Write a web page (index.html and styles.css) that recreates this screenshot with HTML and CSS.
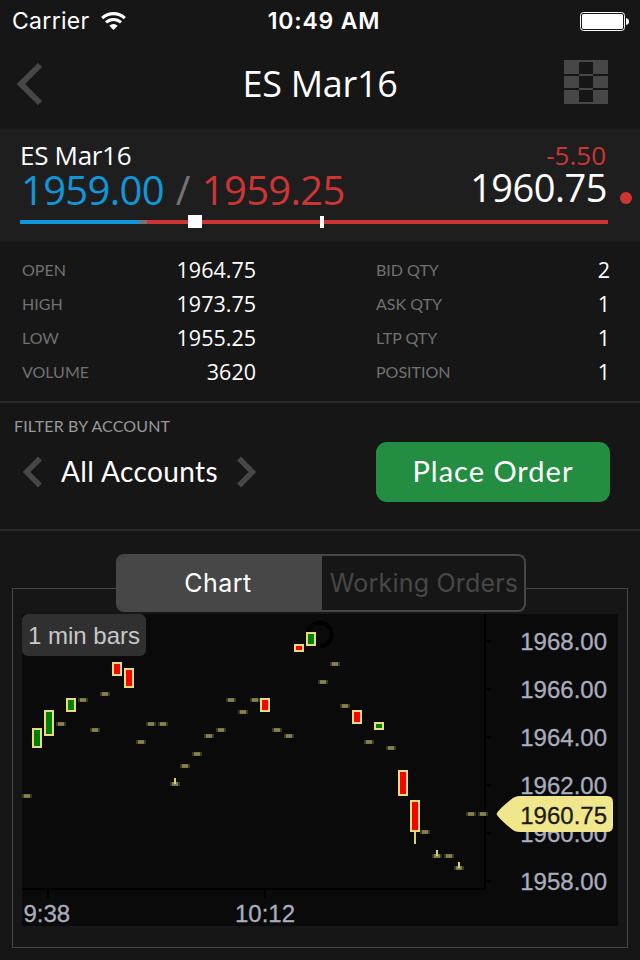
FILE: index.html
```
<!DOCTYPE html>
<html lang="en">
<head>
    <meta charset="UTF-8">
    <meta name="viewport" content="width=device-width, initial-scale=1.0">
    <title>ES Mar16</title>
    <link rel="stylesheet" href="styles.css">
</head>
<body>
    <div class="statusbar">
        <div class="carrier">
            <span>Carrier</span>
            <svg class="wifi" width="25" height="18" viewBox="0 0 25 18">
                <path d="M1.2 6.2 A16.5 16.5 0 0 1 23.8 6.2" fill="none" stroke="#fff" stroke-width="3.2"/>
                <path d="M5 10.4 A11 11 0 0 1 20 10.4" fill="none" stroke="#fff" stroke-width="3"/>
                <path d="M12.5 18 L8.3 13.7 A6.3 6.3 0 0 1 16.7 13.7 Z" fill="#fff"/>
            </svg>
        </div>
        <span class="time">10:49 AM</span>
        <svg class="battery" width="50" height="20" viewBox="0 0 50 20">
            <rect x="0.5" y="1.5" width="44" height="18" rx="3" fill="none" stroke="#fff"/>
            <rect x="2" y="3" width="41" height="15" rx="1.5" fill="#fff"/>
            <path d="M46 7 Q49 7.5 49 10.5 Q49 13.5 46 14 Z" fill="#fff"/>
        </svg>
    </div>

    <header class="navbar">
        <svg class="back" width="26" height="44" viewBox="0 0 26 44">
            <path d="M23 3 L4 22 L23 41" fill="none" stroke="#474747" stroke-width="6"/>
        </svg>
        <h1 class="nav-title">ES Mar16</h1>
        <svg class="grid-icon" width="44" height="44" viewBox="0 0 44 44">
            <path d="M0 0h44v14H0zM0 16h44v12H0zM0 30h44v14H0zM15 13h14v18H15z" fill="#474747"/>
            <path d="M15 2h14v12H15zM15 16h14v12H15zM15 30h14v12H15z" fill="#161616"/>
        </svg>
    </header>

    <section class="quote">
        <div class="quote-left">
            <div class="symbol">ES Mar16</div>
            <div class="bidask"><span class="bid">1959.00</span><span class="slash">/</span><span class="ask">1959.25</span></div>
        </div>
        <div class="quote-right">
            <div class="change">-5.50</div>
            <div class="last">1960.75</div>
        </div>
        <div class="range">
            <div class="range-bid"></div>
            <div class="range-mid"></div>
            <div class="range-ask"></div>
            <div class="marker marker-open"></div>
            <div class="marker marker-last"></div>
        </div>
        <div class="dot"></div>
    </section>

    <section class="stats">
        <dl class="stats-col">
            <div><dt>OPEN</dt><dd>1964.75</dd></div>
            <div><dt>HIGH</dt><dd>1973.75</dd></div>
            <div><dt>LOW</dt><dd>1955.25</dd></div>
            <div><dt>VOLUME</dt><dd>3620</dd></div>
        </dl>
        <dl class="stats-col">
            <div><dt>BID QTY</dt><dd>2</dd></div>
            <div><dt>ASK QTY</dt><dd>1</dd></div>
            <div><dt>LTP QTY</dt><dd>1</dd></div>
            <div><dt>POSITION</dt><dd>1</dd></div>
        </dl>
    </section>

    <section class="filter">
        <div class="filter-label">FILTER BY ACCOUNT</div>
        <div class="filter-row">
            <div class="accounts">
                <svg width="20" height="32" viewBox="0 0 20 32">
                    <path d="M17 2.5 L3.5 16 L17 29.5" fill="none" stroke="#474747" stroke-width="5.4"/>
                </svg>
                <span>All Accounts</span>
                <svg width="20" height="32" viewBox="0 0 20 32">
                    <path d="M3 2.5 L16.5 16 L3 29.5" fill="none" stroke="#474747" stroke-width="5.4"/>
                </svg>
            </div>
            <button class="order-btn">Place Order</button>
        </div>
    </section>

    <section class="panel">
        <div class="tabs">
            <div class="tab active">Chart</div>
            <div class="tab">Working Orders</div>
        </div>
        <div class="chart">
            <svg width="596" height="312" viewBox="22 614 596 312">
                <defs>
                    <g id="dash">
                        <rect x="-5" y="-2" width="10" height="4" fill="#3a3720"/>
                        <rect x="-3" y="-2" width="6" height="4" fill="#7a7444"/>
                        <rect x="-3" y="-1" width="6" height="2" fill="#8a834c"/>
                    </g>
                </defs>
                <!-- axes -->
                <g class="axis">
                    <path d="M485 614 V890 M22 889 H486"/>
                    <path d="M486 641h5M486 689h5M486 737h5M486 785h5M486 833h5M486 881h5M48 890v8M265 890v8"/>
                    <circle cx="320" cy="634.5" r="11.7" class="ring"/>
                </g>
                <!-- flat bars -->
                <g>
                    <use href="#dash" x="27" y="796"/>
                    <use href="#dash" x="61" y="724"/>
                    <use href="#dash" x="83" y="700"/>
                    <use href="#dash" x="95" y="730"/>
                    <use href="#dash" x="105" y="694"/>
                    <use href="#dash" x="141" y="742"/>
                    <use href="#dash" x="151" y="724"/>
                    <use href="#dash" x="163" y="724"/>
                    <use href="#dash" x="175" y="784"/>
                    <use href="#dash" x="185" y="766"/>
                    <use href="#dash" x="197" y="754"/>
                    <use href="#dash" x="209" y="736"/>
                    <use href="#dash" x="221" y="730"/>
                    <use href="#dash" x="231" y="700"/>
                    <use href="#dash" x="243" y="712"/>
                    <use href="#dash" x="255" y="700"/>
                    <use href="#dash" x="277" y="730"/>
                    <use href="#dash" x="289" y="736"/>
                    <use href="#dash" x="323" y="682"/>
                    <use href="#dash" x="335" y="664"/>
                    <use href="#dash" x="345" y="706"/>
                    <use href="#dash" x="369" y="742"/>
                    <use href="#dash" x="391" y="748"/>
                    <use href="#dash" x="425" y="832"/>
                    <use href="#dash" x="437" y="856"/>
                    <use href="#dash" x="449" y="856"/>
                    <use href="#dash" x="459" y="868"/>
                    <use href="#dash" x="471" y="814"/>
                    <use href="#dash" x="483" y="814"/>
                </g>
                <path class="wick" d="M175 778v6M437 850v6M459 862v6M415 832v12"/>
                <!-- candles -->
                <g class="up">
                    <rect x="33" y="729" width="8" height="18"/>
                    <rect x="45" y="711" width="8" height="24"/>
                    <rect x="67" y="699" width="8" height="12"/>
                    <rect x="307" y="633" width="8" height="12"/>
                    <rect x="375" y="723" width="8" height="6"/>
                </g>
                <g class="down">
                    <rect x="113" y="663" width="8" height="12"/>
                    <rect x="125" y="669" width="8" height="18"/>
                    <rect x="261" y="699" width="8" height="12"/>
                    <rect x="295" y="645" width="8" height="6"/>
                    <rect x="353" y="711" width="8" height="12"/>
                    <rect x="399" y="771" width="8" height="24"/>
                    <rect x="411" y="801" width="8" height="30"/>
                </g>
                <g class="label price">
                    <text x="607" y="650">1968.00</text>
                    <text x="607" y="698">1966.00</text>
                    <text x="607" y="746">1964.00</text>
                    <text x="607" y="794">1962.00</text>
                    <text x="607" y="842">1960.00</text>
                    <text x="607" y="890">1958.00</text>
                </g>
                <g class="label">
                    <text x="23.5" y="922">9:38</text>
                    <text x="235" y="922">10:12</text>
                </g>
                <path d="M496.5 814 Q498 810 511 799.5 Q514.5 796 520 796 H607 Q613 796 613 802 V826 Q613 832 607 832 H520 Q514.5 832 511 828.5 Q498 818 496.5 814 Z" fill="#f0e68c"/>
                <text class="tag-text" x="607" y="824">1960.75</text>
            </svg>
            <div class="interval">1 min bars</div>
        </div>
    </section>
</body>
</html>
```
FILE: styles.css
```
* {
    box-sizing: border-box;
}

body {
    margin: 0;
    width: 640px;
    height: 960px;
    overflow: hidden;
    background: #161616;
    color: #fff;
    font-family: "Lato", sans-serif;
}

.statusbar {
    display: grid;
    grid-template-columns: 1fr auto 1fr;
    align-items: center;
    height: 40px;
    padding: 1px 10px 0 12px;
    font-family: "Inter", sans-serif;
    font-size: 23px;
    line-height: 39px;
}

.carrier {
    display: flex;
    align-items: center;
    gap: 11px;
    letter-spacing: 0.3px;
}

.carrier span,
.time {
    padding-top: 1px;
}

.time {
    padding-left: 6px;
    font-weight: 600;
    letter-spacing: 0.8px;
}

.battery {
    justify-self: end;
}

.navbar {
    display: flex;
    align-items: center;
    justify-content: space-between;
    height: 89px;
    padding: 0 32px 1px 17px;
    border-bottom: 1px solid #1a1a1a;
}

.nav-title {
    margin: 0;
    padding-left: 33px;
    font-family: "Open Sans", sans-serif;
    font-size: 36px;
    font-weight: 400;
    line-height: 44px;
    letter-spacing: -0.3px;
}

.grid-icon {
    margin-bottom: 4px;
}

.quote {
    position: relative;
    display: grid;
    grid-template-columns: 1fr auto;
    align-content: start;
    height: 113px;
    padding: 11px 33px 0 20px;
    background: #1e1e1e;
    font-family: "Open Sans", sans-serif;
}

.symbol,
.change {
    height: 30px;
    font-size: 26px;
    line-height: 31px;
    letter-spacing: -0.3px;
}

.change {
    padding-right: 1px;
    letter-spacing: 0;
}

.quote-right {
    padding-right: 1px;
    text-align: right;
}

.bidask {
    height: 50px;
    padding-left: 1px;
    font-size: 40px;
    line-height: 40px;
    letter-spacing: -0.7px;
}

.last {
    font-size: 38px;
    line-height: 35px;
    letter-spacing: -0.5px;
}

.bid {
    color: #0e97d9;
}

.slash {
    margin: 0 12px;
    color: #747474;
}

.ask,
.change {
    color: #cd3535;
}

.range {
    grid-column: 1 / 3;
    position: relative;
    display: flex;
    width: 588px;
    height: 4px;
}

.range-bid {
    width: 119px;
    background: #0e97d9;
}

.range-mid {
    width: 8px;
    background: #747474;
}

.range-ask {
    flex: 1;
    background: #cd3535;
}

.marker {
    position: absolute;
    background: #fff;
}

.marker-open {
    left: 168px;
    top: -5px;
    width: 14px;
    height: 13px;
}

.marker-last {
    left: 300px;
    top: -4px;
    width: 4px;
    height: 12px;
}

.dot {
    position: absolute;
    right: 8px;
    top: 63px;
    width: 12px;
    height: 12px;
    border-radius: 50%;
    background: #cd3535;
}

.stats {
    display: flex;
    gap: 120px;
    height: 161px;
    padding: 11px 30px 0 22px;
    border-bottom: 2px solid #2a2a2a;
}

.stats-col {
    flex: 1;
    margin: 0;
}

.stats-col div {
    display: flex;
    justify-content: space-between;
    height: 34px;
    line-height: 34px;
}

.stats-col dt {
    color: #717171;
    font-size: 16px;
}

.stats-col dd {
    margin: 0;
    font-family: "Open Sans", sans-serif;
    font-size: 21.5px;
}

.filter {
    height: 128px;
    padding: 13px 30px 0 14px;
    border-bottom: 2px solid #2a2a2a;
}

.filter-label {
    height: 26px;
    color: #999;
    font-size: 16px;
    line-height: 20px;
    letter-spacing: 0.15px;
}

.filter-row {
    display: flex;
    justify-content: space-between;
    padding-left: 9px;
}

.accounts {
    display: flex;
    align-items: center;
    gap: 18px;
    height: 59px;
    font-size: 28px;
    letter-spacing: 0.4px;
}

.accounts span {
    margin-bottom: 2px;
}

.order-btn {
    width: 234px;
    height: 60px;
    padding: 0 0 3px;
    border: none;
    border-radius: 11px;
    background: #238e41;
    color: #fff;
    font-family: "Lato", sans-serif;
    font-size: 29px;
    letter-spacing: 1px;
}

.panel {
    height: 360px;
    margin: 57px 12px 0;
    padding: 25px 9px 0;
    border: 1px solid #474747;
}

.tabs {
    display: flex;
    width: 410px;
    height: 58px;
    margin: -60px auto 2px;
    overflow: hidden;
    position: relative;
    left: 1px;
    border: 2px solid #474747;
    border-radius: 8px;
    background: #161616;
    color: #474747;
    font-family: "Inter", sans-serif;
    font-size: 25px;
    line-height: 54px;
    letter-spacing: 0.2px;
    text-align: center;
    white-space: nowrap;
}

.tab {
    width: 202px;
    padding-left: 2px;
}

.tab.active {
    width: 204px;
    padding: 0 4px 0 0;
    background: #474747;
    color: #fff;
    letter-spacing: 0.5px;
}

.chart {
    position: relative;
    width: 596px;
    height: 312px;
    background: #0a0a0a;
}

.chart svg {
    display: block;
}

.interval {
    position: absolute;
    left: 0;
    top: 0;
    width: 124px;
    height: 42px;
    border-radius: 6px;
    background: #303030;
    color: #c8c8c8;
    font-family: "Liberation Sans", sans-serif;
    font-size: 24px;
    line-height: 43px;
    text-align: center;
    white-space: nowrap;
}

.axis {
    fill: none;
    stroke: #000;
    stroke-width: 2;
}

.ring {
    stroke-width: 4;
}

.wick {
    stroke: #dccf6e;
    stroke-width: 2;
}

.up,
.down {
    stroke: #e8dc82;
    stroke-width: 2;
}

.up {
    fill: #008000;
}

.down {
    fill: #f00;
}

.label,
.tag-text {
    font-family: "Liberation Sans", sans-serif;
    font-size: 24px;
    fill: #a9adbd;
    stroke: #a9adbd;
    stroke-width: 0.3;
}

.price,
.tag-text {
    text-anchor: end;
}

.tag-text {
    fill: #1c1a10;
    stroke: #1c1a10;
}
```
